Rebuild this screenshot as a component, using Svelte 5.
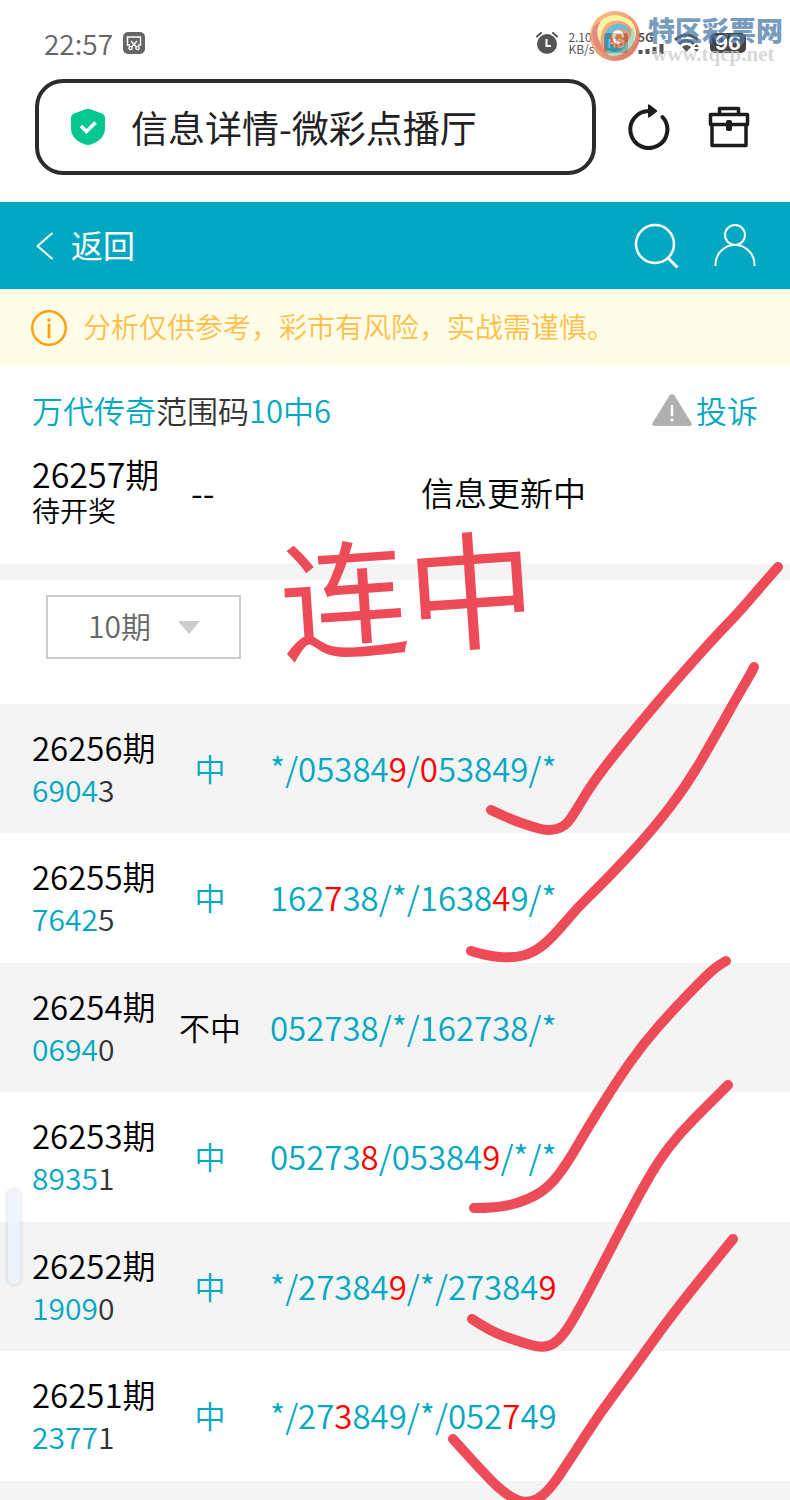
<script lang="ts">
	type Draw = {
		issue: string;
		hit: string;
		rest: string;
		win: boolean;
		code: string;
	};

	// digits between brackets are the ones that were drawn
	const draws: Draw[] = [
		{ issue: '26256', hit: '6904', rest: '3', win: true, code: '*/05384[9]/[0]53849/*' },
		{ issue: '26255', hit: '7642', rest: '5', win: true, code: '162[7]38/*/1638[4]9/*' },
		{ issue: '26254', hit: '0694', rest: '0', win: false, code: '052738/*/162738/*' },
		{ issue: '26253', hit: '8935', rest: '1', win: true, code: '05273[8]/05384[9]/*/*' },
		{ issue: '26252', hit: '1909', rest: '0', win: true, code: '*/27384[9]/*/27384[9]' },
		{ issue: '26251', hit: '2377', rest: '1', win: true, code: '*/27[3]849/*/052[7]49' }
	];

	type Point = [number, number];

	const ticks: Point[][] = [
		[[491, 810], [510, 819], [530, 826], [548, 831], [565, 827], [577, 809], [590, 787], [610, 760], [640, 723], [673, 684], [713, 639], [740, 611], [757, 591], [778, 567]],
		[[471, 951], [487, 956], [513, 958], [533, 953], [552, 938], [577, 908], [603, 883], [650, 833], [687, 785], [717, 733], [737, 697], [750, 675], [754, 667]],
		[[474, 1208], [500, 1208], [530, 1199], [550, 1186], [568, 1162], [587, 1129], [617, 1081], [643, 1044], [673, 1010], [703, 979], [716, 967], [726, 961]],
		[[472, 1319], [490, 1331], [517, 1341], [545, 1349], [562, 1338], [580, 1308], [607, 1256], [633, 1206], [657, 1163], [680, 1133], [707, 1106], [728, 1085]],
		[[453, 1439], [487, 1477], [508, 1496], [527, 1504], [547, 1494], [573, 1455], [600, 1413], [633, 1369], [673, 1313], [733, 1239]]
	];

	function split(code: string) {
		return code.split(/(\[\d\])/).filter(Boolean).map((part) => ({
			text: part.replace(/[[\]]/g, ''),
			red: part.startsWith('[')
		}));
	}

	function smooth(points: Point[]): string {
		let d = `M${points[0].join(' ')}`;
		for (let i = 1; i < points.length - 1; i++) {
			const [x, y] = points[i];
			const [nx, ny] = points[i + 1];
			d += `Q${x} ${y} ${(x + nx) / 2} ${(y + ny) / 2}`;
		}
		return d + `L${points[points.length - 1].join(' ')}`;
	}

	let range = $state('10');
</script>

<div class="page">
	<div class="status">
		<div class="status-left">
			<span class="clock">22:57</span>
			<svg width="22" height="22" viewBox="0 0 22 22" aria-hidden="true">
				<rect width="22" height="22" rx="5" fill="#666" />
				<g fill="none" stroke="#fff" stroke-width="1.4">
					<path d="M7 13H4.500V5H17.500V13H15" />
					<path d="M8 9l5.500 6M14 9l-5.500 6" />
					<circle cx="7.500" cy="16" r="1.600" />
					<circle cx="14.500" cy="16" r="1.600" />
				</g>
			</svg>
		</div>
		<div class="status-right">
			<svg width="22" height="22" viewBox="0 0 22 22" aria-hidden="true">
				<circle cx="11" cy="12" r="10" fill="#555" />
				<path d="M1 4.500L5 1M21 4.500L17 1" stroke="#555" stroke-width="2" stroke-linecap="round" />
				<path d="M10.500 7v7H15" fill="none" stroke="#fff" stroke-width="2" />
			</svg>
			<span class="speed">2.10<br />KB/s</span>
			<span class="hd">HD</span>
			<span class="signal">
				<span>5G</span>
				<svg width="26" height="12" viewBox="0 0 26 12" aria-hidden="true">
					<path d="M2.500 7v4M9.500 6v5M16.500 4v7M23.500 1v10" stroke="#555" stroke-width="4" />
				</svg>
			</span>
			<svg width="26" height="20" viewBox="0 0 26 20" aria-hidden="true">
				<g fill="none" stroke="#555" stroke-width="3">
					<path d="M1 7Q12.500-3 24 7" />
					<path d="M5 11Q12.500 4 20 11" />
				</g>
				<path d="M8 14Q12.500 10 17 14L12.500 19z" fill="#555" />
				<path d="M20 14l2.500-3 2.500 3zM20 16l2.500 3 2.500-3z" fill="#555" />
			</svg>
			<span class="battery">96</span>
		</div>
		<div class="mark">
			<svg width="52" height="52" viewBox="0 0 52 52" aria-hidden="true">
				<defs>
					<linearGradient id="ring" x1="0" y1="0" x2="1" y2="1">
						<stop offset="0" stop-color="#f3b45a" />
						<stop offset="0.450" stop-color="#ee8648" />
						<stop offset="1" stop-color="#c93f3f" />
					</linearGradient>
				</defs>
				<circle cx="26" cy="26" r="25" fill="url(#ring)" />
				<path d="M8 15Q22-3 42 11Q50 20 45 33Q46 15 32 11Q16 8 12 25Q10 34 15 41Q3 30 8 15z" fill="#fdf08a" />
				<path d="M12 41Q25 52 40 39Q50 28 43 16Q43 33 30 38Q20 41 12 41z" fill="#8fd6b4" />
				<path d="M17 39Q11 22 24 15Q38 10 41 24Q35 17 27 20Q18 25 22 34Q28 42 38 34Q29 47 17 39z" fill="#38a6cf" />
				<path d="M3 22Q3 40 21 47Q12 37 9 27Q7 18 12 11Q4 15 3 22z" fill="#d96555" />
				<path d="M24 30Q21 21 29 20Q37 22 34 29Q33 24 29 24Q25 25 27 30Q30 34 35 30Q28 38 24 30z" fill="#fff" />
				<circle cx="30" cy="27" r="3" fill="#f39a3e" />
			</svg>
			<div class="mark-text">
				<strong>特区彩票网</strong>
				<span>www.tqcp.net</span>
			</div>
		</div>
	</div>

	<div class="browser">
		<div class="address">
			<svg width="34" height="38" viewBox="0 0 34 38" aria-hidden="true">
				<path d="M14 1.500Q17 0 20 1.500L31 5.500Q34 6.500 34 10V20Q34 31 21 36Q17 38 13 36Q0 31 0 20V10Q0 6.500 3 5.500z" fill="#04c88f" />
				<path d="M10 18l5.500 5.500 9-9" fill="none" stroke="#fff" stroke-width="3.500" />
			</svg>
			<span>信息详情-微彩点播厅</span>
		</div>
		<button aria-label="刷新">
			<svg width="42" height="46" viewBox="0 0 42 46">
				<path d="M34.500 13A18.500 18.500 0 1 1 21 7" fill="none" stroke="#1c1c1c" stroke-width="4" stroke-linecap="round" />
				<path d="M20 1.500Q20-.5 22 1l6.500 5q1.500 1 0 2L22 13q-2 1.500-2-.5z" fill="#1c1c1c" />
			</svg>
		</button>
		<button aria-label="工具箱">
			<svg width="42" height="42" viewBox="0 0 42 42">
				<g fill="none" stroke="#1c1c1c" stroke-width="3.500" stroke-linejoin="round">
					<path d="M11.500 8V2.500H30.500V8" />
					<path d="M2.500 8.500H39.500V18.500H2.500z" />
					<path d="M4 19V39.500H38V19" />
				</g>
				<rect x="18" y="14" width="6" height="11" rx="2" fill="#1c1c1c" />
			</svg>
		</button>
	</div>

	<header>
		<a class="back" href="#back">
			<svg width="18" height="28" viewBox="0 0 18 28" aria-hidden="true">
				<path d="M16.500 1L1.500 14l15 13" fill="none" stroke="#fff" stroke-width="2" />
			</svg>
			<span>返回</span>
		</a>
		<button aria-label="搜索">
			<svg width="46" height="46" viewBox="0 0 46 46">
				<circle cx="21" cy="21" r="19" fill="none" stroke="#fff" stroke-width="2.500" />
				<path d="M34 35l9.500 9.500" stroke="#fff" stroke-width="3" />
			</svg>
		</button>
		<button aria-label="我的">
			<svg width="42" height="44" viewBox="0 0 42 44">
				<g fill="none" stroke="#fff" stroke-width="2">
					<circle cx="21" cy="11" r="10" />
					<path d="M1.500 42V40.500A19.500 19.500 0 0 1 40.500 40.500V42" />
				</g>
			</svg>
		</button>
	</header>

	<div class="notice">
		<svg width="36" height="36" viewBox="0 0 36 36" aria-hidden="true">
			<circle cx="18" cy="18" r="16.800" fill="none" stroke="#ff9f0a" stroke-width="2.400" />
			<circle cx="18" cy="10" r="1.800" fill="#ff9f0a" />
			<path d="M18 15v12" stroke="#ff9f0a" stroke-width="2.800" stroke-linecap="round" />
		</svg>
		<span>分析仅供参考，彩市有风险，实战需谨慎。</span>
	</div>

	<section class="current">
		<div class="title">
			<h1><em>万代传奇</em>范围码<em>10中6</em></h1>
			<a href="#report">
				<svg width="40" height="32" viewBox="0 0 40 32" aria-hidden="true">
					<path d="M17.500 1.500Q20-1.500 22.500 1.500L39.500 29Q40.500 32 37.500 32H2.500Q-.5 32 .5 29z" fill="#b0b0b0" />
					<path d="M20 12v9" stroke="#fff" stroke-width="2.600" stroke-linecap="round" />
					<circle cx="20" cy="26" r="1.600" fill="#fff" />
				</svg>
				投诉
			</a>
		</div>
		<div class="pending">
			<div class="pending-issue">
				<span>26257期</span>
				<small>待开奖</small>
			</div>
			<span class="dashes">--</span>
			<span class="updating">信息更新中</span>
		</div>
	</section>

	<div class="filter">
		<div class="picker">
			<select bind:value={range} aria-label="期数">
				<option value="10">10期</option>
			</select>
		</div>
	</div>

	<table>
		<tbody>
			{#each draws as draw}
				<tr>
					<td class="issue">
						<div>{draw.issue}期</div>
						<div class="number"><em>{draw.hit}</em>{draw.rest}</div>
					</td>
					<td class="result" class:win={draw.win}>{draw.win ? '中' : '不中'}</td>
					<td class="code">{#each split(draw.code) as part}<span class:red={part.red}>{part.text}</span>{/each}</td>
				</tr>
			{/each}
		</tbody>
	</table>
	<div class="tail"></div>

	<div class="handle"></div>

	<svg class="doodle" width="790" height="1500" viewBox="0 0 790 1500">
		<text x="283" y="653" transform="rotate(-4 283 653)">连中</text>
		{#each ticks as tick}
			<path d={smooth(tick)} />
		{/each}
	</svg>
</div>

<style>
	:global(body) {
		margin: 0;
		background: #fff;
	}

	.page {
		--teal: #02a8c2;
		--grey: #f4f4f4;
		position: relative;
		overflow: hidden;
		font-family: 'Noto Sans CJK SC', sans-serif;
		font-weight: 350;
		color: #000;
	}

	svg {
		display: block;
		flex-shrink: 0;
	}

	button {
		padding: 0;
		border: 0;
		background: none;
		cursor: pointer;
	}

	a {
		text-decoration: none;
	}

	em {
		font-style: normal;
		color: var(--teal);
	}

	/* Status bar */

	.status {
		position: relative;
		display: flex;
		justify-content: space-between;
		align-items: center;
		height: 79px;
		padding: 6px 44px 0;
		box-sizing: border-box;
		color: #666;
	}

	.status-left,
	.status-right {
		display: flex;
		align-items: center;
		gap: 10px;
	}

	.clock {
		font-size: 28px;
		line-height: 32px;
	}

	.status-right {
		color: #555;
	}

	.speed {
		font-size: 12px;
		line-height: 12px;
		font-weight: 400;
	}

	.hd {
		padding: 0 3px;
		border-radius: 4px;
		background: #555;
		color: #fff;
		font-size: 12px;
		line-height: 20px;
		font-weight: 700;
	}

	.signal {
		font-size: 12px;
		line-height: 12px;
		font-weight: 700;
	}

	.battery {
		width: 36px;
		border-radius: 5px;
		background: #444;
		color: #fff;
		font: 700 20px/20px Inter, sans-serif;
		text-align: center;
	}

	.mark {
		position: absolute;
		top: 10px;
		right: 10px;
		display: flex;
		gap: 7px;
		opacity: 0.75;
	}

	.mark-text {
		display: flex;
		flex-direction: column;
		width: 132px;
		padding-top: 6px;
		white-space: nowrap;
	}

	.mark-text strong {
		color: #4a7ba8;
		font-size: 27px;
		line-height: 28px;
		font-weight: 900;
	}

	.mark-text span {
		padding-left: 4px;
		color: #ccc;
		font: 700 21px/20px 'Liberation Serif', serif;
	}

	/* Browser bar */

	.browser {
		display: flex;
		align-items: center;
		gap: 38px;
		height: 96px;
		padding: 0 40px 27px 35px;
	}

	.address {
		flex: 1;
		display: flex;
		align-items: center;
		gap: 26px;
		height: 96px;
		margin-right: -6px;
		padding: 0 32px;
		box-sizing: border-box;
		border: 4px solid #2c2c2c;
		border-radius: 28px;
		color: #222;
		font-size: 37px;
		font-weight: 400;
	}

	/* Site header */

	header {
		display: flex;
		align-items: center;
		gap: 34px;
		height: 87px;
		padding: 0 34px 0 36px;
		background: var(--teal);
	}

	.back {
		flex: 1;
		display: flex;
		align-items: center;
		gap: 17px;
		color: #fff;
		font-size: 32px;
		font-weight: 400;
	}

	.back span,
	.notice span {
		padding-bottom: 4px;
	}

	.notice {
		display: flex;
		align-items: center;
		gap: 16px;
		height: 78px;
		padding: 0 31px;
		background: #fffde8;
		color: #ffbf4a;
		font-size: 28px;
		white-space: nowrap;
	}

	/* Current issue */

	.current {
		padding: 22px 32px 36px;
		border-bottom: 16px solid var(--grey);
	}

	.title {
		display: flex;
		justify-content: space-between;
		align-items: center;
		line-height: 42px;
	}

	h1 {
		margin: 0;
		color: #333;
		font-size: 31px;
		font-weight: inherit;
	}

	.title a {
		display: flex;
		align-items: center;
		gap: 4px;
		color: var(--teal);
		font-size: 31px;
	}

	.pending {
		display: flex;
		align-items: center;
		margin-top: 25px;
	}

	.pending-issue {
		display: flex;
		flex-direction: column;
		width: 159px;
		font-size: 34px;
		line-height: 36px;
	}

	.pending-issue small {
		font-size: 28px;
	}

	.dashes {
		width: 230px;
		font-size: 34px;
		line-height: 36px;
	}

	.updating {
		font-size: 33px;
		line-height: 36px;
	}

	/* Period picker */

	.filter {
		padding: 15px 46px 45px;
	}

	.picker {
		position: relative;
		width: 195px;
	}

	.picker::after {
		content: '';
		position: absolute;
		top: 26px;
		right: 41px;
		border: 11px solid transparent;
		border-top: 13px solid #ccc;
		border-bottom: 0;
		pointer-events: none;
	}

	select {
		appearance: none;
		display: block;
		width: 100%;
		height: 64px;
		padding: 0 40px 4px;
		border: 2px solid #ccc;
		border-radius: 0;
		background: #fff;
		color: #666;
		font: inherit;
		font-size: 30px;
	}

	/* History */

	table {
		width: 100%;
		border-collapse: collapse;
		table-layout: fixed;
	}

	tr {
		height: 129px;
	}

	tr:nth-child(even) {
		height: 130px;
	}

	tr:nth-child(odd),
	.tail {
		background: var(--grey);
	}

	.tail {
		height: 19px;
	}

	td {
		padding: 0 0 2px;
		line-height: 42px;
	}

	.issue {
		width: 128px;
		padding-left: 32px;
		font-size: 33px;
		white-space: nowrap;
	}

	.number {
		color: #333;
		font-size: 30px;
	}

	.result {
		width: 100px;
		font-size: 31px;
		text-align: center;
	}

	.code {
		padding-left: 10px;
		font-size: 33px;
	}

	.win,
	.code {
		color: var(--teal);
	}

	.red {
		color: #f00;
	}

	/* Things that float over the page */

	.handle {
		position: absolute;
		top: 1190px;
		left: 8px;
		width: 12px;
		height: 94px;
		border-radius: 6px;
		background: rgba(238, 242, 255, 0.8);
		box-shadow: 0 0 3px 2px rgba(0, 0, 0, 0.08);
	}

	.doodle {
		position: absolute;
		top: 0;
		left: 0;
		pointer-events: none;
	}

	.doodle path {
		fill: none;
		stroke: #ee4b59;
		stroke-width: 10;
		stroke-linecap: round;
		stroke-linejoin: round;
	}

	.doodle text {
		fill: #ee4b59;
		font-size: 128px;
		font-weight: 400;
	}
</style>
